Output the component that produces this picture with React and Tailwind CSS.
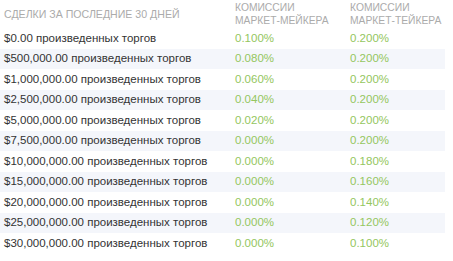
import React from 'react';

const rows = [
    ['$0.00', '0.100%', '0.200%'],
    ['$500,000.00', '0.080%', '0.200%'],
    ['$1,000,000.00', '0.060%', '0.200%'],
    ['$2,500,000.00', '0.040%', '0.200%'],
    ['$5,000,000.00', '0.020%', '0.200%'],
    ['$7,500,000.00', '0.000%', '0.200%'],
    ['$10,000,000.00', '0.000%', '0.180%'],
    ['$15,000,000.00', '0.000%', '0.160%'],
    ['$20,000,000.00', '0.000%', '0.140%'],
    ['$25,000,000.00', '0.000%', '0.120%'],
    ['$30,000,000.00', '0.000%', '0.100%'],
];

const App = () => {
    return (
        <div className="w-[453px] h-[261px] bg-white overflow-hidden font-['Liberation_Sans',Arial,sans-serif]">
            <div className="w-[445px]">
                <div className="flex h-[28px] items-center text-[10.3px] leading-[13px] text-[#ababab] uppercase whitespace-nowrap">
                    <div className="w-[235px] pl-[4px] pt-[1px] text-[10.6px]">Сделки за последние 30 дней</div>
                    <div className="w-[115px]">Комиссии<br />маркет-мейкера</div>
                    <div className="flex-1">Комиссии<br />маркет-тейкера</div>
                </div>
                {rows.map((row, i) => (
                    <div
                        key={row[0]}
                        className={`flex h-[20.5px] items-center text-[11.5px] ${i % 2 === 1 ? 'bg-[#f4f6fb]' : ''}`}
                    >
                        <div className="w-[235px] pl-[4px] text-[#333]">{row[0]} произведенных торгов</div>
                        <div className="w-[115px] text-[#94c660]">{row[1]}</div>
                        <div className="flex-1 text-[#94c660]">{row[2]}</div>
                    </div>
                ))}
            </div>
        </div>
    );
};

export default App;
